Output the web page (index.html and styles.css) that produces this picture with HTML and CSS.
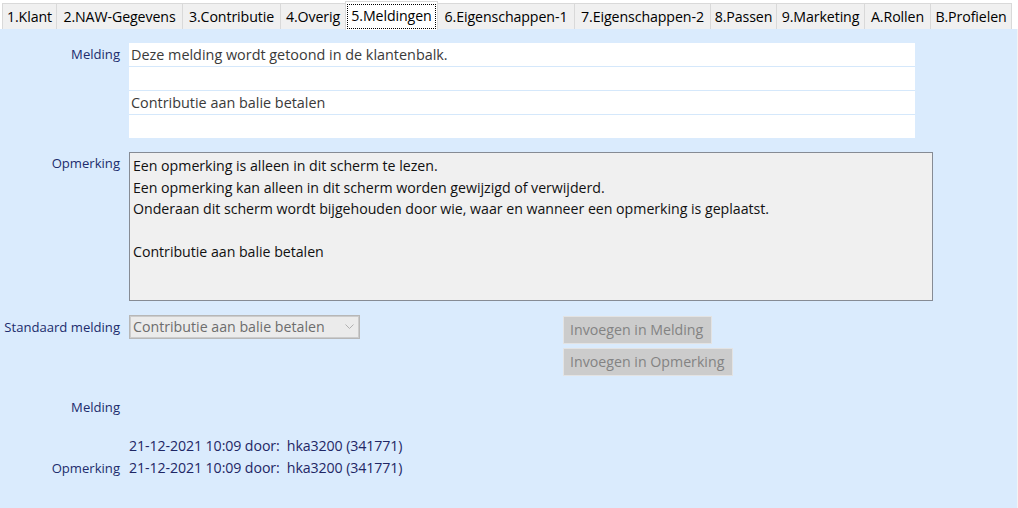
FILE: index.html
```html
<!DOCTYPE html>
<html lang="nl">
<head>
<meta charset="utf-8">
<title>Meldingen</title>
<link rel="stylesheet" href="styles.css">
</head>
<body>
<div class="tabs">
  <div class="tab t1">1.Klant</div>
  <div class="tab t2">2.NAW-Gegevens</div>
  <div class="tab t3">3.Contributie</div>
  <div class="tab t4">4.Overig</div>
  <div class="tab t5 active"><span class="focus">5.Meldingen</span></div>
  <div class="tab t6">6.Eigenschappen-1</div>
  <div class="tab t7">7.Eigenschappen-2</div>
  <div class="tab t8">8.Passen</div>
  <div class="tab t9">9.Marketing</div>
  <div class="tab t10">A.Rollen</div>
  <div class="tab t11">B.Profielen</div>
</div>
<div class="panel">
  <div class="row row-melding">
    <div class="label">Melding</div>
    <div class="lines">
      <div class="line">Deze melding wordt getoond in de klantenbalk.</div>
      <div class="line"></div>
      <div class="line">Contributie aan balie betalen</div>
      <div class="line"></div>
    </div>
  </div>
  <div class="row row-opm">
    <div class="label">Opmerking</div>
    <div class="memo">
      <div>Een opmerking is alleen in dit scherm te lezen.</div>
      <div>Een opmerking kan alleen in dit scherm worden gewijzigd of verwijderd.</div>
      <div>Onderaan dit scherm wordt bijgehouden door wie, waar en wanneer een opmerking is geplaatst.</div>
      <div>&nbsp;</div>
      <div>Contributie aan balie betalen</div>
    </div>
  </div>
  <div class="row row-std">
    <div class="label">Standaard melding</div>
    <div class="combo">
      <span class="combo-text">Contributie aan balie betalen</span>
      <span class="combo-btn"><svg width="9" height="6" viewBox="0 0 9 6"><path d="M0.5 0.5 L4.5 4.5 L8.5 0.5" fill="none" stroke="#b0b0b0" stroke-width="1"/></svg></span>
    </div>
    <div class="buttons">
      <div class="btn">Invoegen in Melding</div>
      <div class="btn">Invoegen in Opmerking</div>
    </div>
  </div>
  <div class="row row-m2">
    <div class="label">Melding</div>
  </div>
  <div class="row row-d1">
    <div class="label"></div>
    <div class="info">21-12-2021 10:09 door:&nbsp; hka3200 (341771)</div>
  </div>
  <div class="row row-d2">
    <div class="label">Opmerking</div>
    <div class="info">21-12-2021 10:09 door:&nbsp; hka3200 (341771)</div>
  </div>
</div>
</body>
</html>
```
FILE: styles.css
```css
* { box-sizing: border-box; }
html, body { margin: 0; padding: 0; }
body {
  width: 1018px;
  height: 508px;
  overflow: hidden;
  background: #ffffff;
  font-family: "Open Sans", "Noto Sans", sans-serif;
  font-size: 14.2px;
  color: #000;
}
.tabs {
  display: flex;
  align-items: flex-end;
  height: 29px;
  padding-left: 2px;
  background: #ffffff;
  letter-spacing: -0.1px;
}
.tab {
  height: 26px;
  display: flex;
  align-items: center;
  justify-content: center;
  background: #f0f0f0;
  border: 1px solid #d9d9d9;
  border-left: none;
  border-bottom: none;
  color: #000;
  white-space: nowrap;
  flex: 0 0 auto;
}
.tab:first-child { border-left: 1px solid #d9d9d9; }
.t1 { width: 55px; }
.t2 { width: 126px; }
.t3 { width: 98px; }
.t4 { width: 65px; }
.t5 { width: 92px; }
.t6 { width: 137px; }
.t7 { width: 136px; }
.t8 { width: 66px; }
.t9 { width: 88px; }
.t10 { width: 66px; }
.t11 { width: 81px; }
.tab.active {
  height: 29px;
  background: #ffffff;
  border-left: 1px solid #d9d9d9;
  margin-left: -1px;
  width: 93px;
  position: relative;
  top: 1px;
}
.focus {
  display: block;
  border: 1px dotted #000;
  padding: 2px 3px 3px;
  line-height: 18px;
}
.panel {
  height: 479px;
  background: #daebfd;
  border-right: 1px solid #f3f3f3;
  padding-top: 14px;
}
.row {
  display: flex;
  align-items: flex-start;
}
.label {
  width: 120px;
  flex: 0 0 120px;
  margin-right: 9px;
  text-align: right;
  color: #202c6c;
  white-space: nowrap;
  font-size: 13.1px;
}
.row-melding .label { padding-top: 2px; line-height: 18px; }
.lines {
  width: 786px;
  background: #ffffff;
  font-size: 14.4px;
}
.line {
  height: 24px;
  line-height: 23px;
  padding-left: 2px;
  color: #3a3a3a;
  border-top: 1px solid #d5e8fb;
  white-space: nowrap;
}
.line:first-child { height: 23px; border-top: none; line-height: 23px; }
.row-opm { margin-top: 14px; }
.row-opm .label { padding-top: 2px; line-height: 18px; }
.memo {
  width: 804px;
  height: 149px;
  background: #f0f0f0;
  border: 1px solid #868b94;
  padding: 2px 3px;
  line-height: 21.5px;
  color: #111;
  white-space: nowrap;
  letter-spacing: -0.03px;
}
.row-std { margin-top: 14px; }
.row-std .label { padding-top: 3px; line-height: 18px; }
.combo {
  width: 231px;
  height: 24px;
  display: flex;
  border: 1px solid #b7b7b7;
  background: #cccccc;
}
.combo-text {
  flex: 1;
  background: #ebebeb;
  color: #6d6d6d;
  padding-left: 2px;
  margin: 1px 0 1px 1px;
  line-height: 20px;
  white-space: nowrap;
  overflow: hidden;
}
.combo-btn {
  width: 18px;
  display: flex;
  align-items: center;
  justify-content: center;
  background: #ebebeb;
  margin: 1px 1px 1px 0;
}
.buttons {
  margin-left: 203px;
  margin-top: 1px;
  display: flex;
  flex-direction: column;
  align-items: flex-start;
  gap: 4px;
}
.btn {
  height: 28px;
  line-height: 26px;
  padding: 0 8px 0 6px;
  background: #cccccc;
  border: 1px solid #e3e3e3;
  color: #838383;
  white-space: nowrap;
}
.btn-wide { padding-right: 8px; }
.row-m2 { margin-top: 22px; }
.row-m2 .label { line-height: 18px; }
.row-d1 { margin-top: 21px; }
.row-d2 { margin-top: 4px; }
.row-d1 .label, .row-d2 .label, .info { line-height: 18px; }
.info { color: #1f2765; white-space: nowrap; letter-spacing: -0.1px; }
```
